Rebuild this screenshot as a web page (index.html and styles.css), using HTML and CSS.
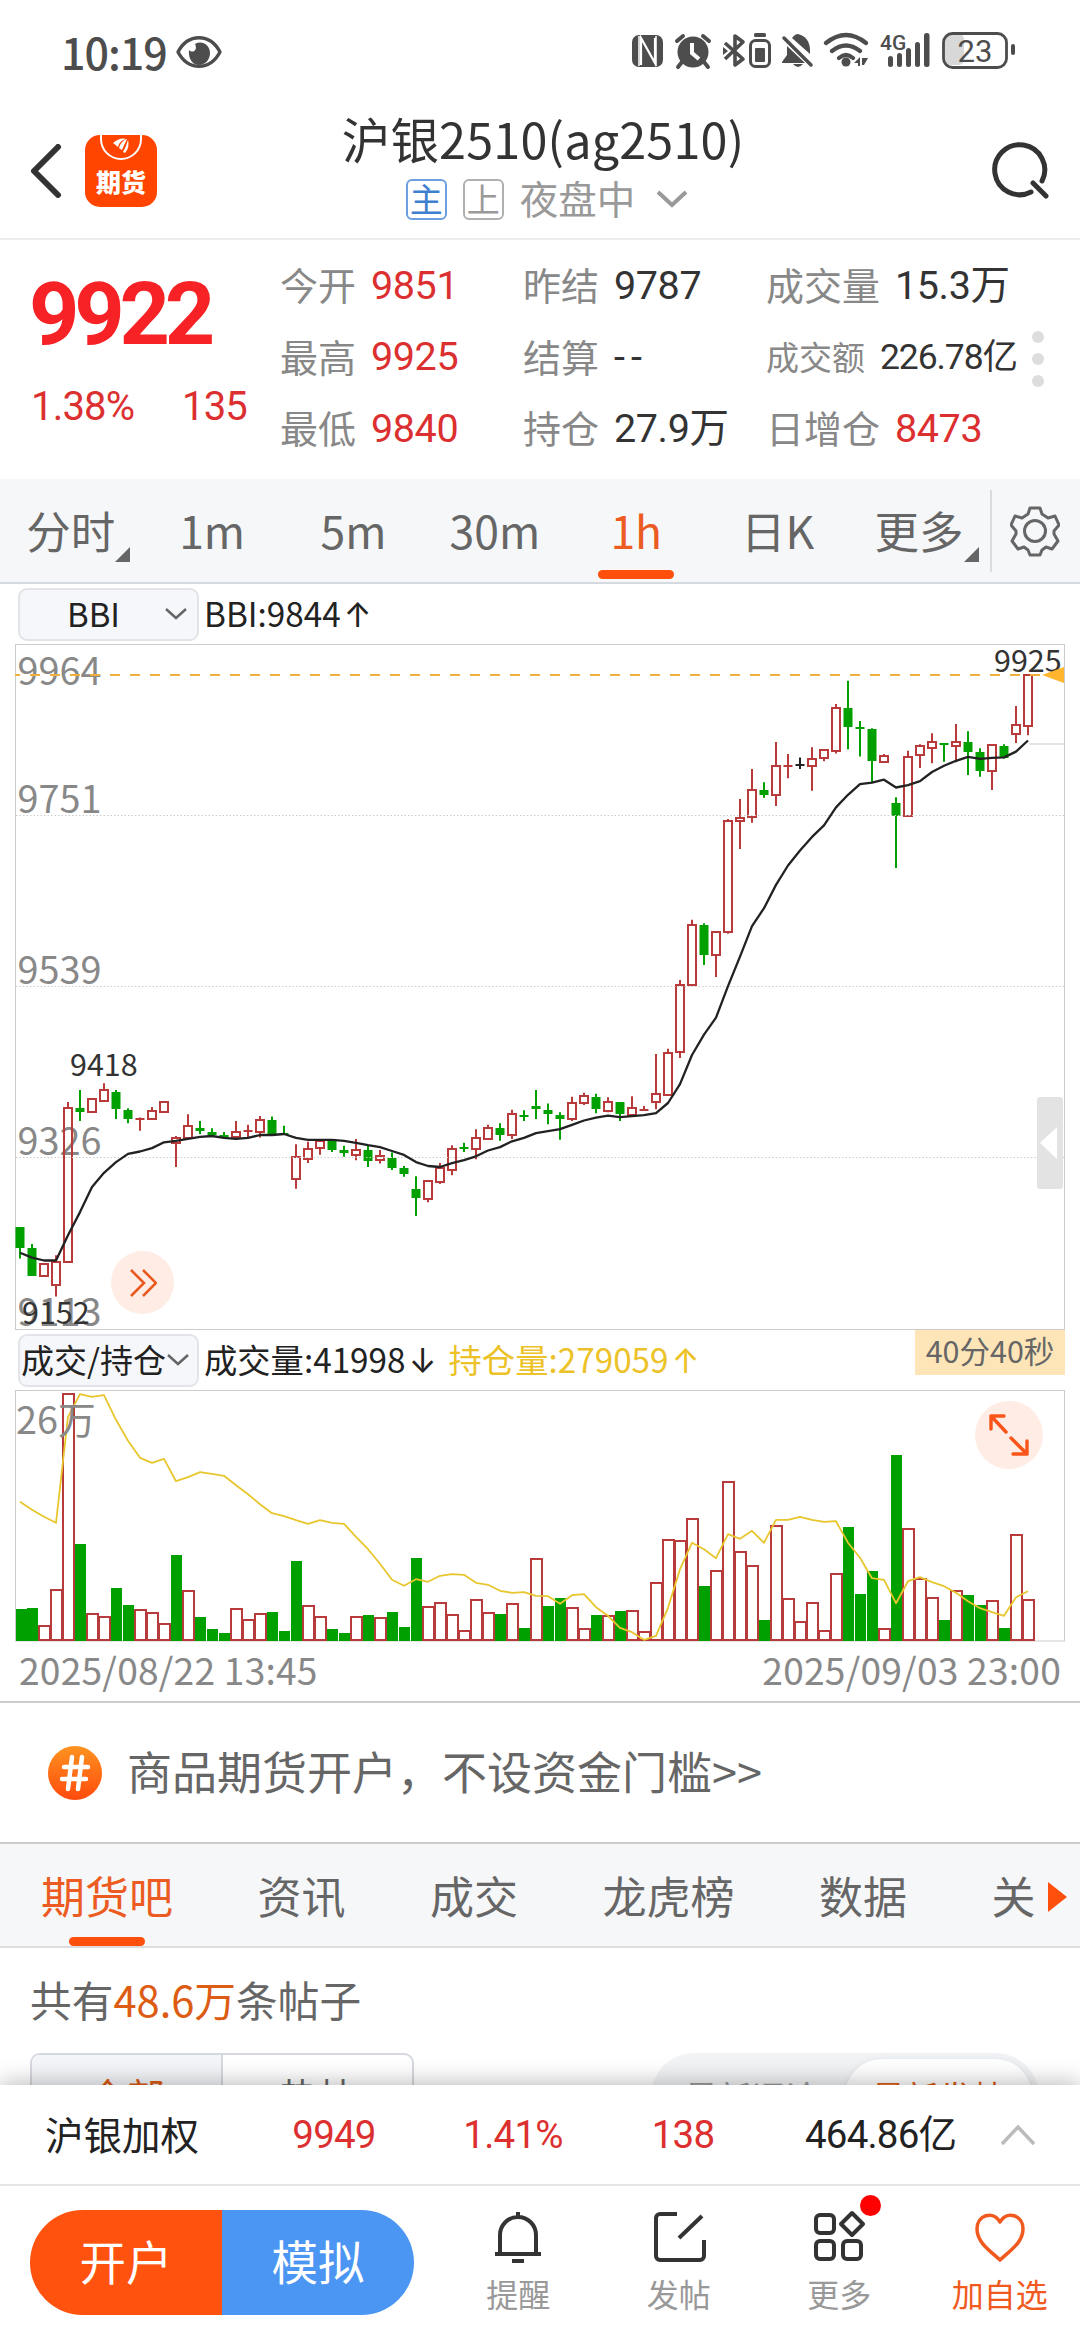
FILE: index.html
```html
<!DOCTYPE html>
<html lang="zh-CN">
<head>
  <meta charset="UTF-8">
  <meta name="viewport" content="width=device-width, initial-scale=1.0">
  <title>沪银2510</title>
  <link rel="stylesheet" href="styles.css">
</head>
<body>
  <div class="status-bar">
    <span class="time">10:19</span>
    <svg class="eye" width="46" height="34" viewBox="0 0 46 34">
      <path d="M2 17C12 -2 34 -2 44 17C34 36 12 36 2 17Z" fill="none" stroke="#4d4d4d" stroke-width="3.4" stroke-linejoin="round"/>
      <path d="M13 15C17 19 22 15 19 9C26 5 34 10 34 18C34 25 29 30 23 30C17 30 12 24 13 15Z" fill="#4d4d4d"/>
    </svg>
    <svg class="status-icons" width="386" height="40" viewBox="0 0 386 40">
      <g fill="#4d4d4d">
        <rect x="0" y="3" width="31" height="32" rx="7"/>
        <path d="M7 4v30M24 4v30" stroke="#fff" stroke-width="1.500"/>
        <path d="M9 33V6l14 25V6" fill="none" stroke="#fff" stroke-width="2.200"/>
        <circle cx="61" cy="20" r="15.5"/>
        <path d="M45 9l6-5M77 9l-6-5M50 30l-4 5M72 30l4 5" stroke="#4d4d4d" stroke-width="4" stroke-linecap="round"/>
        <path d="M60 11v10l7 6" fill="none" stroke="#fff" stroke-width="4"/>
        <path d="M93 11l18 16-8 6V4l8 6-18 17" fill="none" stroke="#4d4d4d" stroke-width="3.6" stroke-linejoin="round"/>
        <path d="M91 15l5 4-5 4z"/>
        <rect x="122" y="1" width="12" height="4" rx="1.5"/>
        <rect x="118.500" y="8.500" width="19" height="26" rx="5" fill="none" stroke="#4d4d4d" stroke-width="3"/>
        <rect x="123" y="16" width="10" height="14" rx="1"/>
        <path d="M150 30l5-7v-9l18 17h-23zM160 6q3-4 6-4q12 3 12 17v3zM161 32h10q-5 6-10 0z"/>
        <path d="M152 6l27 27" stroke="#4d4d4d" stroke-width="3.500" stroke-linecap="round"/>
        <g fill="none" stroke="#4d4d4d" stroke-width="4.200" stroke-linecap="round">
          <path d="M194 11q20-16 40 0M200 19q14-11 28 0M207 26q7-6 14 0"/>
        </g>
        <circle cx="214" cy="30" r="4.500"/>
        <path d="M222 31l6-6v9h-2v-3zM230 26h6l-4 7h-2z"/>
        <rect x="256" y="24" width="5" height="11" rx="2.500"/>
        <rect x="265" y="21" width="5" height="14" rx="2.500"/>
        <rect x="274" y="16" width="5" height="19" rx="2.500"/>
        <rect x="283" y="10" width="5" height="25" rx="2.500"/>
        <rect x="292" y="1" width="5.500" height="34" rx="2.500"/>
        <rect x="312" y="2" width="20" height="31" rx="5" fill="#d8d8d8"/>
        <rect x="311.500" y="1.500" width="63" height="34" rx="9" fill="none" stroke="#4d4d4d" stroke-width="2.800"/>
        <rect x="379" y="12" width="4" height="11" rx="2"/>
        <text class="net" x="248" y="18">4G</text>
        <text class="bat" x="343" y="30" text-anchor="middle">23</text>
      </g>
    </svg>
  </div>

  <div class="header">
    <svg class="back" width="32" height="54" viewBox="0 0 32 54"><path d="M28 3L4 27l24 24" fill="none" stroke="#333" stroke-width="6" stroke-linecap="round" stroke-linejoin="round"/></svg>
    <div class="logo">
      <svg width="42" height="26" viewBox="0 0 42 26">
        <path d="M1 0v4a20 20 0 0 0 40 0V0" fill="none" stroke="#fff" stroke-width="2"/>
        <path d="M13 8Q20 2 26 4Q19 6 18 12ZM19 13Q21 6 27 4Q24 10 22 15ZM23 17Q26 12 28 5Q30 12 25 18Z" fill="#fff"/>
      </svg>
      <span>期货</span>
    </div>
    <div class="title-box">
      <div class="title">沪银2510(ag2510)</div>
      <div class="subtitle">
        <span class="badge main">主</span>
        <span class="badge">上</span>
        <span class="session">夜盘中</span>
        <svg width="34" height="20" viewBox="0 0 34 20"><path d="M3 3l14 13L31 3" fill="none" stroke="#999" stroke-width="4"/></svg>
      </div>
    </div>
    <svg class="search" width="62" height="62" viewBox="0 0 62 62"><path d="M41 52A25 25 0 1 1 52 41M43 43l13 13" fill="none" stroke="#333" stroke-width="5" stroke-linecap="round"/></svg>
  </div>

  <div class="quote">
    <div class="last">
      <div class="price">9922</div>
      <div class="change"><span>1.38%</span><span>135</span></div>
    </div>
    <div class="col col1">
      <div><label>今开</label><b class="red">9851</b></div>
      <div><label>最高</label><b class="red">9925</b></div>
      <div><label>最低</label><b class="red">9840</b></div>
    </div>
    <div class="col col2">
      <div><label>昨结</label><b>9787</b></div>
      <div><label>结算</label><b class="none">--</b></div>
      <div><label>持仓</label><b>27.9万</b></div>
    </div>
    <div class="col col3">
      <div><label>成交量</label><b>15.3万</b></div>
      <div class="small"><label>成交额</label><b>226.78亿</b></div>
      <div><label>日增仓</label><b class="red">8473</b></div>
    </div>
    <div class="dots"><i></i><i></i><i></i></div>
  </div>

  <div class="periods">
    <div class="period more">分时</div>
    <div class="period">1m</div>
    <div class="period">5m</div>
    <div class="period">30m</div>
    <div class="period active">1h</div>
    <div class="period">日K</div>
    <div class="period more">更多</div>
    <div class="setting">
      <svg width="50" height="52" viewBox="-25 -26 50 52" fill="none" stroke="#666" stroke-width="3" stroke-linejoin="round">
        <path d="M-5 -23h10l2 6l6 4l7-2l4 9l-5 6l0 3l4 7l-6 8l-6-2l-4 3l-2 5h-10l-2-5l-4-3l-6 2l-6-8l4-7l0-3l-5-6l4-9l7 2l6-4z"/>
        <circle r="10.500"/>
      </svg>
    </div>
  </div>

  <div class="indicator">
    <div class="select"><span>BBI</span><svg width="24" height="14" viewBox="0 0 24 14"><path d="M2 2l10 9 10-9" fill="none" stroke="#666" stroke-width="2.500"/></svg></div>
    <span class="ind">BBI:9844<i>↑</i></span>
  </div>

  <div class="chart">
    <svg id="kline" width="1080" height="686" viewBox="0 0 1080 686"></svg>
    <div class="circle forward">
      <svg width="28" height="30" viewBox="0 0 28 30"><path d="M2 2l13 13L2 28M14 2l13 13L14 28" fill="none" stroke="#e85a20" stroke-width="2.600"/></svg>
    </div>
    <div class="handle"></div>
  </div>

  <div class="indicator second">
    <div class="select wide"><span>成交/持仓</span><svg width="24" height="14" viewBox="0 0 24 14"><path d="M2 2l10 9 10-9" fill="none" stroke="#666" stroke-width="2.500"/></svg></div>
    <span class="ind">成交量:41998<i>↓</i></span>
    <span class="ind yellow">持仓量:279059<i>↑</i></span>
    <span class="countdown">40分40秒</span>
  </div>

  <div class="chart">
    <svg id="volume" width="1080" height="252" viewBox="0 0 1080 252"></svg>
    <div class="circle expand">
      <svg width="42" height="44" viewBox="0 0 42 44" fill="none" stroke="#f9541a" stroke-width="3.400" stroke-linecap="round" stroke-linejoin="round"><path d="M18 19L3 3M3 16V3h13M23 25l16 16M39 28v13H25"/></svg>
    </div>
  </div>
  <div class="dates"><span>2025/08/22 13:45</span><span>2025/09/03 23:00</span></div>

  <div class="promo">
    <svg width="56" height="56" viewBox="0 0 56 56">
      <defs><linearGradient id="g" x1="0" y1="0" x2="0" y2="1"><stop offset="0" stop-color="#ff9320"/><stop offset="1" stop-color="#ff4a0c"/></linearGradient></defs>
      <circle cx="28" cy="28" r="27" fill="url(#g)"/>
      <path d="M25 12l-4 32M35 12l-4 32M17 22h24M15 34h24" stroke="#fff" stroke-width="4.500" stroke-linecap="round"/>
    </svg>
    <span>商品期货开户，不设资金门槛&gt;&gt;</span>
  </div>

  <div class="tabs">
    <span class="active">期货吧</span>
    <span>资讯</span>
    <span>成交</span>
    <span>龙虎榜</span>
    <span>数据</span>
    <span>关</span>
    <i class="arrow"></i>
  </div>

  <div class="posts">
    <div class="count">共有<em>48.6万</em>条帖子</div>
    <div class="filters">
      <div class="segment"><span class="on">全部</span><span>热帖</span></div>
      <div class="toggle"><span>最新评论</span><span class="on">最新发帖</span></div>
    </div>
  </div>

  <div class="ticker">
    <span class="name">沪银加权</span>
    <span class="num red">9949</span>
    <span class="num red">1.41%</span>
    <span class="num red">138</span>
    <span class="amount">464.86亿</span>
    <svg width="36" height="22" viewBox="0 0 36 22"><path d="M2 20L18 3l16 17" fill="none" stroke="#bbb" stroke-width="3.500"/></svg>
  </div>

  <div class="bottom-bar">
    <div class="pill"><span>开户</span><span class="blue">模拟</span></div>
    <div class="item">
      <svg width="54" height="54" viewBox="0 0 54 54" fill="none" stroke="#333" stroke-width="4"><path d="M9 44V25a18 18 0 0 1 36 0v19M4 44h46M27 2v5M21 51h12"/></svg>
      <span>提醒</span>
    </div>
    <div class="item">
      <svg width="54" height="54" viewBox="0 0 54 54" fill="none" stroke="#333" stroke-width="4"><path d="M25 4H8a4 4 0 0 0-4 4v38a4 4 0 0 0 4 4h40a4 4 0 0 0 4-4V30M50 6L27 28"/></svg>
      <span>发帖</span>
    </div>
    <div class="item">
      <svg width="54" height="54" viewBox="0 0 54 54" fill="none" stroke="#333" stroke-width="4" stroke-linejoin="round"><rect x="4" y="5" width="18" height="18" rx="4"/><rect x="4" y="31" width="18" height="18" rx="4"/><rect x="31" y="31" width="18" height="18" rx="4"/><path d="M40 3l11 11-11 11-11-11z"/></svg>
      <span>更多</span>
      <i class="dot"></i>
    </div>
    <div class="item fav">
      <svg width="54" height="54" viewBox="0 0 54 54" fill="none" stroke="#f05a1e" stroke-width="3.500" stroke-linejoin="round"><path d="M27 50C16 40 4 32 4 19C4 5 20 0 27 12C34 0 50 5 50 19C50 32 38 40 27 50Z"/></svg>
      <span>加自选</span>
    </div>
  </div>

  <script src="script.js"></script>
</body>
</html>
```
FILE: styles.css
```css
* {
  box-sizing: border-box;
}
body {
  margin: 0;
  width: 1080px;
  height: 2340px;
  overflow: hidden;
  background: #fff;
  font-family: "Noto Sans CJK SC", "Noto Sans", sans-serif;
  color: #333;
}
svg {
  display: block;
  flex: none;
}
i, em {
  font-style: normal;
}
.red {
  color: #dc2f30;
}

/* status bar */
.status-bar {
  height: 104px;
  padding: 0 62px 0 61px;
  display: flex;
  align-items: center;
}
.time {
  margin-top: -3px;
  font-size: 43px;
  letter-spacing: -1px;
  line-height: 60px;
  color: #4d4d4d;
  font-weight: 500;
}
.eye {
  margin-left: 9px;
}
.status-icons {
  margin-left: auto;
}
.net {
  font: 500 21px Roboto, sans-serif;
}
.bat {
  font: 400 31px Roboto, sans-serif;
}

/* header */
.header {
  height: 136px;
  border-bottom: 2px solid #ececec;
  display: flex;
  align-items: center;
  padding: 0 28px 0 30px;
}
.logo {
  width: 72px;
  height: 72px;
  margin-left: 23px;
  background: #ff4500;
  border-radius: 15px;
  color: #fff;
  display: flex;
  flex-direction: column;
  align-items: center;
}
.logo span {
  font-size: 25px;
  font-weight: 900;
  line-height: 40px;
}
.title-box {
  flex: 1;
  display: flex;
  flex-direction: column;
  align-items: center;
  height: 134px;
  padding-right: 61px;
}
.title {
  margin-top: 2px;
  font-size: 48.5px;
  letter-spacing: 0.2px;
  line-height: 64px;
}
.subtitle {
  display: flex;
  align-items: center;
  margin-top: 8px;
  margin-left: 9px;
  height: 42px;
}
.badge {
  width: 41px;
  height: 41px;
  margin-right: 16px;
  border: 2px solid #b0b0b0;
  border-radius: 6px;
  color: #999;
  font-size: 33px;
  line-height: 34px;
  text-align: center;
}
.badge.main {
  color: #3f7fd0;
  border-color: #6b9fdf;
}
.session {
  font-size: 38.5px;
  line-height: 42px;
  margin-top: -4px;
  color: #999;
  margin-right: 20px;
}

/* quote */
.quote {
  height: 239px;
  padding-left: 32px;
  display: flex;
}
.last {
  width: 248px;
}
.price {
  margin: 30px 0 0 -3px;
  height: 88px;
  font: 700 88px/88px Roboto, sans-serif;
  letter-spacing: -5.2px;
  color: #f72226;
}
.change {
  display: flex;
  justify-content: space-between;
  width: 216px;
  margin-top: 25px;
  margin-left: -1px;
  font: 400 40px/48px Roboto, sans-serif;
  letter-spacing: -0.8px;
  color: #dc2f30;
}
.col {
  width: 243px;
  padding-top: 10px;
}
.col div {
  display: flex;
  align-items: center;
  height: 71.5px;
}
.col label {
  font-size: 38px;
  line-height: 50px;
  margin: -3px 15px 0 0;
  color: #888;
}
.col b {
  font-family: Roboto, "Noto Sans CJK SC", sans-serif;
  font-weight: 400;
  font-size: 39.5px;
  line-height: 50px;
  letter-spacing: -0.4px;
  white-space: nowrap;
}
.col .none {
  letter-spacing: 6px;
}
.col3 {
  width: 266px;
}
.col .small label {
  font-size: 33px;
}
.col .small b {
  font-size: 35.5px;
  letter-spacing: -1.1px;
}
.dots {
  display: flex;
  flex-direction: column;
  gap: 10px;
  padding-top: 91px;
}
.dots i {
  width: 12px;
  height: 12px;
  border-radius: 50%;
  background: #ddd;
}

/* periods */
.periods {
  height: 105px;
  display: flex;
  background: #f6f7f9;
  border-bottom: 2px solid #d5dae0;
}
.period {
  position: relative;
  width: 141.4px;
  text-align: center;
  font-size: 44.5px;
  line-height: 102px;
  color: #666;
}
.period.active {
  color: #ec5c22;
}
.period.active::after,
.tabs .active::after {
  content: "";
  position: absolute;
  left: 50%;
  bottom: 3px;
  width: 76px;
  height: 9px;
  margin-left: -38px;
  border-radius: 5px;
  background: #ff4f0c;
}
.period.more::after {
  content: "";
  position: absolute;
  right: 11px;
  bottom: 20px;
  border-left: 15px solid transparent;
  border-bottom: 15px solid #666;
}
.setting {
  flex: 1;
  height: 82px;
  margin-top: 11px;
  padding-left: 18px;
  border-left: 2px solid #dcdcdc;
  display: flex;
  align-items: center;
}

/* charts */
.indicator {
  height: 60px;
  padding-left: 18px;
  display: flex;
  align-items: center;
}
.select {
  width: 181px;
  height: 53px;
  margin-right: 5px;
  padding: 0 9px 0 47px;
  border: 2px solid #e2e4e9;
  border-radius: 9px;
  background: #f6f7fa;
  font-size: 33px;
  line-height: 44px;
  display: flex;
  align-items: center;
  justify-content: space-between;
  color: #222;
  white-space: nowrap;
}
.select span {
  margin-top: -3px;
}
.select.wide {
  padding-left: 1px;
}
.ind {
  font-size: 33.3px;
  line-height: 48px;
  margin-top: -2px;
  color: #222;
  white-space: nowrap;
}
.ind i {
  font-family: Inter, sans-serif;
  display: inline-block;
  width: 34px;
  text-align: center;
  line-height: 40px;
}
.ind.yellow {
  color: #ecc228;
  margin-left: 9px;
}
.second {
  padding-right: 15px;
}
.countdown {
  align-self: flex-start;
  margin-left: auto;
  width: 150px;
  height: 45px;
  background: #fde5b8;
  color: #666;
  font-size: 30.5px;
  line-height: 41px;
  text-align: center;
}
.chart {
  position: relative;
}
.grid-label {
  font-size: 37.8px;
  fill: #888;
}
.mark {
  font-size: 30.5px;
  fill: #333;
}
.circle {
  position: absolute;
  border-radius: 50%;
  background: #ffece4;
  display: flex;
  align-items: center;
  justify-content: center;
}
.forward {
  left: 111px;
  top: 607px;
  width: 63px;
  height: 63px;
}
.expand {
  left: 975px;
  top: 11px;
  width: 68px;
  height: 68px;
}
.handle {
  position: absolute;
  left: 1037px;
  top: 453px;
  width: 26px;
  height: 92px;
  border-radius: 3px;
  background: #e3e3e3;
}
.handle::after {
  content: "";
  position: absolute;
  left: 3px;
  top: 30px;
  border: 16px solid transparent;
  border-left: 0;
  border-right: 17px solid #fff;
}
.dates {
  height: 61px;
  padding: 0 19px;
  display: flex;
  justify-content: space-between;
  font-size: 37.2px;
  letter-spacing: 0.2px;
  line-height: 54px;
  color: #888;
  border-bottom: 2px solid #ccc;
}

/* promo */
.promo {
  height: 139px;
  padding-left: 47px;
  display: flex;
  align-items: center;
  font-size: 45px;
  color: #666;
}
.promo span {
  margin: -5px 0 0 24px;
}

/* tabs */
.tabs {
  position: relative;
  height: 106px;
  padding-left: 41px;
  display: flex;
  gap: 84.5px;
  font-size: 44px;
  line-height: 102px;
  color: #666;
  background: #f6f7f9;
  border-top: 2px solid #ccc;
  border-bottom: 2px solid #ddd;
}
.tabs span {
  position: relative;
  white-space: nowrap;
}
.tabs .active {
  color: #ec5c22;
}
.tabs .active::after {
  bottom: 0;
}
.arrow {
  position: absolute;
  right: 13px;
  top: 38px;
  border: 15px solid transparent;
  border-right: 0;
  border-left: 19px solid #ff4f0c;
}

/* posts */
.posts {
  height: 137px;
  overflow: hidden;
}
.count {
  padding: 21px 0 0 30px;
  font-size: 41.7px;
  line-height: 60px;
  color: #666;
}
.count em {
  color: #dd5c14;
}
.filters {
  display: flex;
  justify-content: space-between;
  padding: 24px 41px 0 30px;
}
.segment {
  display: flex;
  width: 384px;
  height: 86px;
  border: 2px solid #d5d8de;
  border-radius: 10px;
  overflow: hidden;
  font-size: 38px;
  line-height: 80px;
  text-align: center;
  color: #666;
}
.segment span {
  flex: 1;
}
.segment .on {
  background: #f4f5f8;
  border-right: 2px solid #d5d8de;
  color: #dd5c14;
}
.toggle {
  display: flex;
  width: 388px;
  height: 86px;
  padding: 6px 7px 6px 7px;
  border-radius: 43px;
  background: #f1f3f5;
  font-size: 33.5px;
  line-height: 73px;
  text-align: center;
  color: #999;
}
.toggle span {
  width: 187px;
}
.toggle .on {
  border-radius: 38px;
  background: #fff;
  color: #dd5c14;
  box-shadow: 0 0 6px #e2e5e8;
}

/* index ticker */
.ticker {
  position: relative;
  height: 101px;
  padding-left: 45px;
  display: flex;
  align-items: center;
  background: #fff;
  border-bottom: 2px solid #e6e6e6;
  box-shadow: 0 -2px 22px rgba(0, 0, 0, 0.28);
  font-size: 38.5px;
  line-height: 50px;
  color: #222;
}
.name {
  width: 198px;
  margin-top: -3px;
}
.num {
  width: 182px;
  text-align: center;
}
.num,
.amount {
  font-family: Roboto, "Noto Sans CJK SC", sans-serif;
  letter-spacing: -0.8px;
}
.num + .num {
  width: 176px;
}
.num + .num + .num {
  width: 164px;
}
.amount {
  width: 235px;
  padding-left: 40px;
}

/* bottom bar */
.bottom-bar {
  position: relative;
  height: 154px;
  padding: 24px 0 0 30px;
  display: flex;
  background: #fff;
}
.pill {
  display: flex;
  width: 384px;
  height: 105px;
  margin-right: 24px;
  border-radius: 53px;
  overflow: hidden;
  color: #fff;
  font-size: 46.5px;
  line-height: 100px;
  text-align: center;
}
.pill span {
  flex: 1;
  background: #ff520e;
}
.pill .blue {
  background: #4b95f3;
}
.item {
  position: relative;
  width: 160.5px;
  display: flex;
  flex-direction: column;
  align-items: center;
  font-size: 32px;
  line-height: 44px;
  color: #999;
}
.item span {
  margin-top: 7px;
}
.fav {
  color: #f05a1e;
}
.dot {
  position: absolute;
  left: 101px;
  top: -15px;
  width: 21px;
  height: 21px;
  border-radius: 50%;
  background: #f00;
}
```
FILE: script.js
```js
const RED = '#b83a3a', GREEN = '#00a000', DARK = '#222';
const STEP = 12, X0 = 20;

// [color, high, body top, body bottom, low]
const candles = [
  ['g',1335,1335,1378,1400],['g',1370,1378,1436,1436],['r',1412,1412,1435,1435],['r',1393,1406,1454,1478],
  ['r',1077,1090,1406,1406],['g',1052,1089,1098,1116],['r',1070,1070,1098,1098],['r',1038,1053,1074,1074],
  ['g',1052,1056,1092,1112],['g',1090,1093,1112,1121],['r',1109,1109,1111,1136],['r',1087,1095,1112,1112],
  ['r',1076,1076,1097,1097],['r',1147,1152,1162,1211],['r',1102,1127,1152,1152],['g',1116,1131,1137,1143],
  ['g',1131,1138,1146,1146],['g',1139,1145,1150,1150],['r',1116,1138,1150,1153],['r',1124,1135,1138,1151],
  ['r',1106,1115,1139,1150],['g',1107,1114,1142,1142],['g',1126,1140,1143,1143],['r',1164,1190,1235,1256],
  ['r',1159,1174,1194,1203],['r',1153,1157,1172,1186],['g',1157,1157,1176,1180],['g',1167,1176,1182,1190],
  ['r',1153,1175,1187,1197],['g',1167,1176,1199,1211],['r',1176,1189,1197,1204],['g',1181,1193,1213,1217],
  ['g',1209,1213,1226,1231],['g',1230,1256,1274,1312],['r',1239,1239,1277,1284],['r',1203,1214,1241,1246],
  ['r',1166,1173,1218,1228],['g',1161,1170,1173,1180],['r',1133,1151,1173,1195],['r',1124,1130,1154,1154],
  ['g',1121,1131,1145,1157],['r',1093,1101,1146,1153],['g',1094,1103,1106,1116],['g',1052,1085,1092,1112],
  ['g',1080,1094,1102,1123],['g',1098,1103,1111,1155],['r',1066,1080,1112,1116],['r',1058,1064,1080,1083],
  ['g',1060,1066,1092,1100],['r',1067,1076,1095,1098],['g',1077,1077,1102,1116],['r',1065,1090,1103,1103],
  ['r',1085,1091,1094,1094],['r',978,1061,1077,1092],['r',967,975,1063,1063],['r',825,835,974,986],
  ['r',701,711,836,836],['g',708,712,773,794],['r',727,727,774,819],['r',493,498,726,730],
  ['r',452,490,497,555],['r',390,433,489,501],['g',417,434,443,449],['r',334,383,443,466],
  ['r',359,381,384,409],['k',366,380,383,390],['r',345,369,384,435],['r',350,350,367,374],
  ['r',256,263,353,358],['g',208,264,303,349],['g',291,303,306,364],['g',306,308,373,417],
  ['r',359,363,376,376],['g',448,460,487,594],['r',352,366,487,487],['r',339,343,361,388],
  ['r',316,335,347,378],['g',337,337,340,375],['r',297,334,343,376],['g',312,334,354,402],
  ['g',347,355,394,406],['r',341,341,394,433],['g',339,342,367,368],['r',260,300,318,336],
  ['r',195,195,301,320]
];
const bbi = [1388,1398,1404,1404,1352,1304,1252,1223,1201,1184,1179,1172,1160,1157,1153,1149,1147,1151,1153,1151,1145,1145,1143,1151,1155,1155,1155,1157,1161,1166,1170,1178,1186,1201,1209,1211,1203,1197,1189,1177,1170,1158,1151,1141,1137,1133,1124,1115,1109,1105,1108,1106,1104,1100,1079,1040,980,938,903,838,777,714,677,629,589,558,530,506,469,443,421,418,412,428,423,415,396,383,373,365,369,367,366,354,331];

const volumes = 'g870 g867 r917 r809 r222 g675 r881 r890 g807 g858 r869 r878 r911 g708 r812 g894 g930 g942 r866 r899 r881 g879 g936 g726 r857 r890 g930 g942 r890 g888 r893 g879 g924 g717 r860 r848 r884 r932 r839 r878 g885 r851 g927 r716 g861 g837 r863 r926 g888 r887 g876 r872 r936 r789 r659 r662 r596 g801 r752 r485 r695 r737 g903 r617 r836 r906 r848 r932 r761 g624 g825 g756 r926 g408 r626 r776 r833 g903 r812 g828 g858 r842 g927 r644 r839'.split(' ');
const holding = [545,569,590,608,290,222,230,225,299,362,413,428,416,483,471,456,461,467,495,522,552,579,588,600,611,600,608,611,650,687,731,779,797,777,785,767,762,764,788,794,812,818,816,827,828,851,825,822,861,887,923,936,959,947,863,747,668,687,714,642,656,632,668,599,599,590,599,605,603,668,713,774,779,849,783,771,786,798,818,843,864,876,887,831,813];

const x = i => X0 + i * STEP;
const ky = v => (v - 133) / 2.0632 + 0.5;
const vy = v => (v - 211) / 3 + 0.5;
const line = (x1, y1, x2, y2, color, w, dash) =>
  `<line x1="${x1}" y1="${y1}" x2="${x2}" y2="${y2}" stroke="${color}" stroke-width="${w}"${dash ? ` stroke-dasharray="${dash}"` : ''}/>`;
const curve = (data, fy, color, w) =>
  `<polyline points="${data.map((v, i) => x(i) + ',' + fy(v).toFixed(1)).join(' ')}" fill="none" stroke="${color}" stroke-width="${w}" stroke-linejoin="round"/>`;
const text = (cls, tx, ty, s) => `<text class="${cls}" x="${tx}" y="${ty}">${s}</text>`;

function drawKline() {
  let s = '<rect x="15.5" y="0.5" width="1049" height="685" fill="none" stroke="#ccc"/>';
  s += line(1029, 100, 1064, 100, '#e6e6e6', 2);
  // price labels sit under the candles
  s += text('grid-label', 17.500, 41, 9964) + text('grid-label', 17.500, 169, 9751) + text('grid-label', 17.500, 340, 9539)
     + text('grid-label', 17.500, 511, 9326) + text('grid-label', 17.500, 682, 9113);
  candles.forEach(([c, h, t, b, l], i) => {
    const color = c === 'g' ? GREEN : c === 'r' ? RED : DARK;
    const cx = x(i), top = Math.round(ky(t)), bot = Math.round(ky(b));
    s += line(cx, ky(h), cx, top, color, 2) + line(cx, bot, cx, ky(l), color, 2);
    if (c === 'r' && bot - top > 2) {
      s += `<rect x="${cx - 4}" y="${top}" width="8" height="${bot - top}" fill="none" stroke="${color}" stroke-width="2"/>`;
    } else {
      s += `<rect x="${cx - 4.5}" y="${top}" width="9" height="${Math.max(2, bot - top)}" fill="${color}"/>`;
    }
  });
  [171.5, 342.5, 513.5].forEach(y => s += line(16, y, 1064, y, '#ccc', 1, '1.5 2'));
  s += curve(bbi, ky, DARK, 2.3);
  s += text('mark', 70, 432, 9418) + text('mark', 22, 680, 9152) + text('mark', 994, 28, 9925);
  s += '<path d="M1042 31L1064 23v16z" fill="#ffb52e"/>';
  s += line(15, 31, 20, 31, '#f0b03c', 2) + line(30, 31, 1044, 31, '#f0b03c', 2, '10 10');
  document.getElementById('kline').innerHTML = s;
}

function drawVolume() {
  let s = '<rect x="15.5" y="0.5" width="1049" height="250.500" fill="none" stroke="#ccc"/>';
  volumes.forEach((d, i) => {
    const top = Math.round(vy(+d.slice(1))), cx = x(i);
    s += d[0] === 'g'
      ? `<rect x="${Math.max(16, cx - 5)}" y="${top - 1}" width="11" height="${252 - top}" fill="${GREEN}"/>`
      : `<rect x="${cx - 5}" y="${top}" width="11" height="${250 - top}" fill="#fff" stroke="${RED}" stroke-width="2"/>`;
  });
  s += curve(holding, vy, '#e8c62e', 1.8);
  s += text('grid-label', 16, 44, '26万');
  document.getElementById('volume').innerHTML = s;
}

drawKline();
drawVolume();
```
